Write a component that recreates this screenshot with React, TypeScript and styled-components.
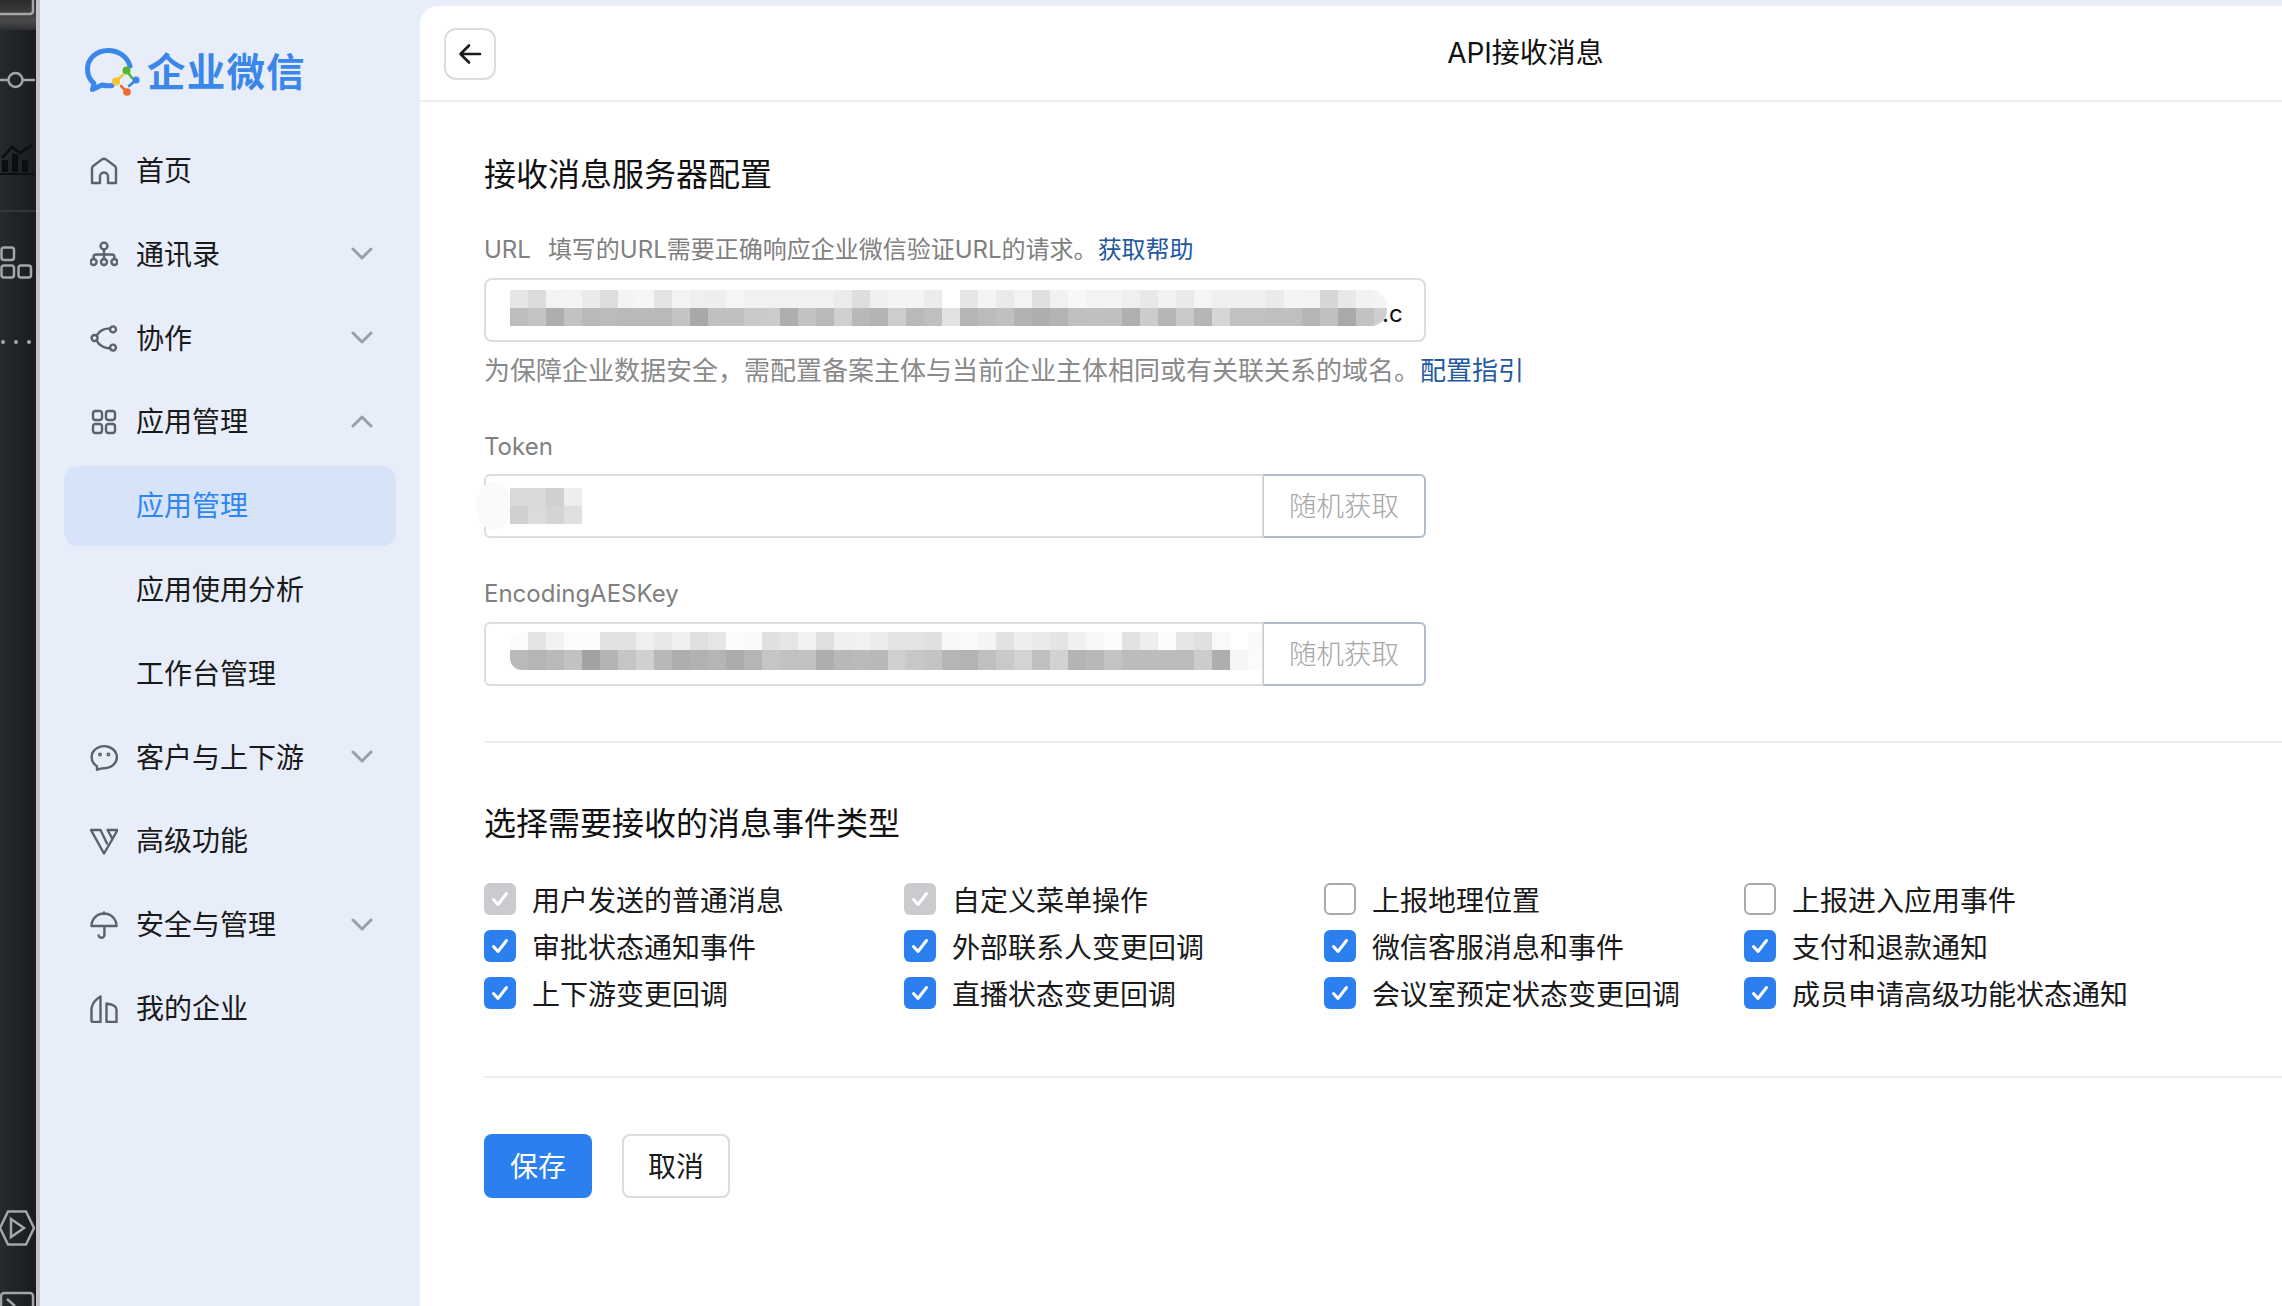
import React from 'react';
import styled, { createGlobalStyle } from 'styled-components';

const GlobalStyle = createGlobalStyle`
  html, body {
    margin: 0;
    padding: 0;
    height: 100%;
    overflow: hidden;
    background: #e7edf9;
    font-family: Inter, "Noto Sans CJK SC", sans-serif;
    color: #1a1a1a;
  }
  * { box-sizing: border-box; }
`;

const Page = styled.div`
  display: flex;
  width: 2282px;
  height: 1306px;
  overflow: hidden;
`;

const Rail = styled.div`
  position: relative;
  flex: none;
  width: 40px;
  display: flex;
  flex-direction: column;
  justify-content: space-between;
  background: linear-gradient(90deg, #262a2e 0, #1a1b1d 36px);
  border-right: 4px solid #c0c3c7;

  &::before {
    content: '';
    position: absolute;
    top: 0;
    left: 0;
    width: 36px;
    height: 30px;
    background: linear-gradient(180deg, #2a2a2c 0, #4a4a4c 70%, #2c2e31 100%);
  }
`;

const RailIcons = styled.svg`
  position: relative;
  display: block;
  width: 36px;
  fill: none;
  stroke: #a4a6a8;
  stroke-width: 2.5;
`;

const Sidebar = styled.nav`
  flex: none;
  width: 380px;
  padding: 0 24px;
  background: #e7edf9;
`;

const Logo = styled.div`
  display: flex;
  align-items: center;
  height: 131px;
  padding: 13px 0 0 21px;
  gap: 6px;
`;

const LogoText = styled.span`
  font-size: 38.5px;
  font-weight: 700;
  letter-spacing: 1.2px;
  color: #3a86ea;
  line-height: 1;
`;

const Menu = styled.ul`
  list-style: none;
  margin: 0;
  padding: 0;
  display: flex;
  flex-direction: column;
  gap: 3.8px;
`;

const MenuRow = styled.li<{ $sub?: boolean; $active?: boolean }>`
  display: flex;
  align-items: center;
  gap: 18px;
  height: 80px;
  padding: 0 23px 0 ${(p) => (p.$sub ? '72px' : '26px')};
  border-radius: 14px;
  font-size: 28px;
  color: ${(p) => (p.$active ? '#2f86f0' : '#1a1a1a')};
  background: ${(p) => (p.$active ? '#d6e3f9' : 'transparent')};
`;

const MenuLabel = styled.span`
  flex: 1;
  line-height: 40px;
`;

const MenuIcon = styled.svg`
  flex: none;
  width: 28px;
  height: 28px;
  fill: none;
  stroke: #5d6168;
  stroke-width: 2.4;
  stroke-linejoin: round;
  stroke-linecap: round;
`;

const Chevron = styled.svg<{ $up?: boolean }>`
  flex: none;
  width: 22px;
  height: 13px;
  fill: none;
  stroke: #9b9fa7;
  stroke-width: 3;
  stroke-linecap: round;
  stroke-linejoin: round;
  transform: translateY(-1px) ${(p) => (p.$up ? 'rotate(180deg)' : '')};
`;

const Main = styled.main`
  flex: 1;
  margin-top: 6px;
  min-width: 0;
  background: #fff;
  border-top-left-radius: 18px;
  overflow: hidden;
`;

const TopBar = styled.header`
  display: flex;
  align-items: flex-start;
  height: 96px;
  padding: 22px 0 0 24px;
  border-bottom: 2px solid #eeeeef;
`;

const BackButton = styled.button`
  flex: none;
  display: flex;
  align-items: center;
  justify-content: center;
  width: 52px;
  height: 52px;
  padding: 0;
  background: #fff;
  border: 2px solid #dcdcdc;
  border-radius: 12px;

  svg {
    width: 24px;
    height: 24px;
    fill: none;
    stroke: #1a1a1a;
    stroke-width: 2.6;
    stroke-linecap: round;
    stroke-linejoin: round;
  }
`;

const PageTitle = styled.h1`
  flex: 1;
  margin: 0;
  padding-left: 273px;
  text-align: center;
  font-size: 28px;
  font-weight: 400;
  line-height: 50px;
  color: #111;
`;

const Content = styled.section`
  padding: 51px 0 0 64px;
`;

const SectionTitle = styled.h2<{ $top?: number }>`
  margin: ${(p) => p.$top ?? 0}px 0 0;
  font-size: 32px;
  font-weight: 400;
  line-height: 44px;
  color: #111;
`;

const FieldLabel = styled.div<{ $top: number }>`
  margin-top: ${(p) => p.$top}px;
  font-size: 24px;
  line-height: 36px;
  color: #808080;
`;

const UrlTag = styled.span`
  margin-right: 17px;
`;

const HelpLink = styled.a`
  color: #24589f;
  text-decoration: none;
`;

const HelpText = styled.div`
  margin-top: 11px;
  font-size: 26px;
  line-height: 36px;
  color: #8a8a8a;
`;

const InputRow = styled.div<{ $top: number }>`
  position: relative;
  display: flex;
  width: 942px;
  height: 64px;
  margin-top: ${(p) => p.$top}px;
`;

const InputBox = styled.div<{ $alone?: boolean; $pad: number }>`
  flex: 1;
  min-width: 0;
  display: flex;
  align-items: flex-start;
  padding: ${(p) => p.$pad}px 0 0 24px;
  background: #fff;
  border: 2px solid #dddddf;
  border-right-width: ${(p) => (p.$alone ? '2px' : '1px')};
  border-radius: ${(p) => (p.$alone ? '8px' : '6px 0 0 6px')};
  overflow: hidden;
`;

const InputTail = styled.span`
  flex: none;
  margin: 6px 0 0 -5px;
  font-size: 24px;
  line-height: 36px;
  color: #111;
`;

const RandomButton = styled.button`
  flex: none;
  width: 163px;
  padding: 0 0 4px;
  background: #fff;
  border: 2px solid #aebccb;
  border-left: 1px solid #c9ced4;
  border-radius: 0 6px 6px 0;
  font-family: inherit;
  font-size: 27.5px;
  font-weight: 300;
  color: #a6a6a6;
`;

const MosaicSvg = styled.svg<{ $radius: string }>`
  position: relative;
  z-index: 1;
  flex: none;
  display: block;
  border-radius: ${(p) => p.$radius};
`;

const Smudge = styled.div`
  position: absolute;
  left: -8px;
  top: 8px;
  width: 36px;
  height: 48px;
  border-radius: 50%;
  background: #fafafa;
`;

const Rule = styled.hr<{ $top: number }>`
  margin: ${(p) => p.$top}px 0 0;
  height: 2px;
  border: 0;
  background: #eeeeef;
`;

const EventGrid = styled.div`
  display: grid;
  grid-template-columns: repeat(4, 420px);
  row-gap: 15px;
  margin-top: 37px;
`;

const EventItem = styled.label`
  display: flex;
  align-items: center;
  gap: 16px;
  height: 32px;
  font-size: 28px;
  white-space: nowrap;
  color: #1a1a1a;
`;

const CheckBox = styled.span<{ $state: 'on' | 'off' | 'locked' }>`
  flex: none;
  display: flex;
  width: 32px;
  height: 32px;
  border-radius: 6px;
  background: ${(p) => (p.$state === 'on' ? '#2b7fee' : p.$state === 'locked' ? '#c9cbcf' : '#fff')};
  border: ${(p) => (p.$state === 'off' ? '2px solid #a9a9ab' : '0')};

  svg {
    width: 32px;
    height: 32px;
    fill: none;
    stroke: #fff;
    stroke-width: 3;
    stroke-linecap: round;
    stroke-linejoin: round;
  }
`;

const Actions = styled.div`
  display: flex;
  gap: 30px;
  margin-top: 56px;
`;

const ActionButton = styled.button<{ $primary?: boolean }>`
  width: 108px;
  height: 64px;
  padding: 0 0 2px;
  border-radius: 8px;
  font-family: inherit;
  font-size: 28px;
  color: ${(p) => (p.$primary ? '#fff' : '#1a1a1a')};
  background: ${(p) => (p.$primary ? '#2b7fee' : '#fff')};
  border: ${(p) => (p.$primary ? '0' : '2px solid #dcdcdc')};
`;

const urlMosaic = [
  'e6 dc f3 f4 ea dd f4 f6 e4 f3 ef ee f5 f1 f1 f1 f1 f1 eb de f0 f4 f4 ec ff e6 f4 ea f3 e0 f1 f8 f3 f3 ef e8 f2 ea f5 ef ef f0 ea f4 f3 d6 e8 f2 f4',
  'bd c4 ae c2 b9 bb b9 b9 b9 c4 a8 c0 bf c9 cb ae c2 b9 cf b8 b3 cd b9 bf e2 b5 bb c0 b2 ae b3 bf c0 bf af cc b6 c9 b6 d6 c1 c1 bf bf b5 c0 a9 c2 ce',
];

const tokenMosaic = ['d9 d9 d0 ee', 'cf db d4 df'];

const aesMosaic = [
  'fb e4 f2 fb fb e2 e2 ef e7 f0 df e6 fc fa e0 e6 f1 df f0 f1 ec e3 e3 e0 f8 f9 f4 e2 ee ea e4 f0 f8 fc e2 ee fc e6 e0 f9 ff fa',
  'b9 b5 b9 c2 a2 b4 c5 d0 b8 ae b1 b5 ac b5 c5 c1 c1 ae b8 ba b8 cf c7 c3 b6 b3 bf c9 d3 bf d2 b4 b8 c4 bc bc bc bc cc ae f5 fb',
];

function Mosaic(props: { rows: string[]; heights: number[]; width?: number; radius?: string }) {
  const cells = props.rows.map((r) => r.split(' '));
  const fullWidth = cells[0].length * 18;
  const width = props.width ?? fullWidth;
  const height = props.heights.reduce((a, b) => a + b, 0);
  let y = 0;
  return (
    <MosaicSvg
      $radius={props.radius ?? '0'}
      width={width}
      height={height}
      viewBox={`0 0 ${width} ${height}`}
      shapeRendering="crispEdges"
    >
      {cells.map((row, r) => {
        const top = y;
        y += props.heights[r];
        return row.map((c, i) => (
          <rect key={`${r}-${i}`} x={i * 18} y={top} width={18} height={props.heights[r]} fill={`#${c}${c}${c}`} />
        ));
      })}
    </MosaicSvg>
  );
}

const icons: Record<string, React.ReactNode> = {
  home: <path d="M2 26V11.5Q2 10 3.2 9L12 2.4Q14 1 16 2.4L24.8 9Q26 10 26 11.5V26H18V19.5a4 4 0 0 0-8 0V26Z" />,
  contacts: (
    <>
      <circle cx="14" cy="5" r="3.4" />
      <circle cx="3.6" cy="21" r="3" />
      <circle cx="14" cy="21" r="3" />
      <circle cx="24.4" cy="21" r="3" />
      <path d="M3.6 18V16Q3.6 13.5 6 13.5H22Q24.4 13.5 24.4 16V18M14 8.5V18" />
    </>
  ),
  collab: (
    <>
      <circle cx="4.6" cy="13" r="3" />
      <circle cx="23" cy="4.4" r="3" />
      <circle cx="23" cy="22.6" r="3" />
      <path d="M20 3.8C14.500 2.800 9 6 6.600 10.400M6.600 15.600C9 20 14.500 24 20 23.200" />
    </>
  ),
  apps: (
    <>
      <rect x="3" y="3" width="9" height="9" rx="2.4" />
      <rect x="16" y="3" width="9" height="9" rx="2.4" />
      <rect x="3" y="16" width="9" height="9" rx="2.4" />
      <rect x="16" y="16" width="9" height="9" rx="2.4" />
    </>
  ),
  chat: (
    <>
      <path d="M7 25.8V22.2A12.6 11 0 1 1 14 24.2Q10.6 24.2 7 25.8Z" />
      <circle cx="10" cy="10.5" r="0.8" />
      <circle cx="18.4" cy="10.5" r="0.8" />
    </>
  ),
  advanced: <path d="M1 3H10.500L17 16.500M1 3L14 26.500L22.500 12M17.500 3H27.500L22.500 12Z" />,
  shield: <path d="M14 1.500V3M1.500 15A12.500 12.500 0 0 1 26.500 15M1.500 15H26.500M14.400 15V24.500A3 3 0 0 1 8.600 24.500" />,
  company: <path d="M1.500 13Q3 6 10.500 1.500V27H3Q1.500 27 1.500 25.500ZM16.500 8.500Q26.500 9.500 26.500 15V27H16.500Z" />,
};

function NavItem(props: { icon?: string; label: string; arrow?: 'up' | 'down'; sub?: boolean; active?: boolean }) {
  return (
    <MenuRow $sub={props.sub} $active={props.active}>
      {props.icon && <MenuIcon viewBox="0 0 28 28">{icons[props.icon]}</MenuIcon>}
      <MenuLabel>{props.label}</MenuLabel>
      {props.arrow && (
        <Chevron $up={props.arrow === 'up'} viewBox="0 0 22 13">
          <path d="M2 2L11 11L20 2" />
        </Chevron>
      )}
    </MenuRow>
  );
}

const events: [string, 'on' | 'off' | 'locked'][] = [
  ['用户发送的普通消息', 'locked'],
  ['自定义菜单操作', 'locked'],
  ['上报地理位置', 'off'],
  ['上报进入应用事件', 'off'],
  ['审批状态通知事件', 'on'],
  ['外部联系人变更回调', 'on'],
  ['微信客服消息和事件', 'on'],
  ['支付和退款通知', 'on'],
  ['上下游变更回调', 'on'],
  ['直播状态变更回调', 'on'],
  ['会议室预定状态变更回调', 'on'],
  ['成员申请高级功能状态通知', 'on'],
];

export default function App() {
  return (
    <Page>
      <GlobalStyle />
      <Rail>
        <RailIcons height="352" viewBox="0 0 36 352">
          <rect x="-4" y="-10" width="37" height="24" rx="3" />
          <path d="M0 80H8M23 80H35" />
          <circle cx="15.5" cy="80" r="7" />
          <path d="M0 174H34" stroke="#0c0d0e" strokeWidth="2" />
          <path d="M2 172V160H8V172ZM12 172V154H18V172ZM22 172V160H28V172Z" fill="#0c0d0e" stroke="none" />
          <path d="M2 158L12 147L20 153L32 145" stroke="#0c0d0e" strokeWidth="2.5" />
          <path d="M0 211H36" stroke="#3a3d40" strokeWidth="1.5" />
          <rect x="1.5" y="247.5" width="12.5" height="12.5" rx="2.5" />
          <rect x="1.5" y="265.5" width="12.5" height="12" rx="2.5" />
          <rect x="18.5" y="265.5" width="12.5" height="12" rx="2.5" />
          <circle cx="3" cy="342" r="2" fill="#a4a6a8" stroke="none" />
          <circle cx="16" cy="342" r="2" fill="#a4a6a8" stroke="none" />
          <circle cx="29" cy="342" r="2" fill="#a4a6a8" stroke="none" />
        </RailIcons>
        <RailIcons height="96" viewBox="0 0 36 96">
          <path d="M8 1.5H26L34 18L26 34.5H8L0 18Z" />
          <path d="M11 9L24 18L11 27Z" />
          <rect x="1" y="83" width="32" height="24" rx="3" />
          <path d="M7 89L15 96" />
        </RailIcons>
      </Rail>

      <Sidebar>
        <Logo>
          <svg width="56" height="48" viewBox="0 0 56 48">
            <path
              d="M45 18C42 8 33 2.5 23 2.5C11 2.5 2.5 11 2.5 21C2.5 28 6 33 9 35.5L7.5 41.5L17 37C21 38 24 38 27 37.5"
              fill="none"
              stroke="#3a86ea"
              strokeWidth="5"
              strokeLinecap="round"
              strokeLinejoin="round"
            />
            <path d="M42 23L47 30" stroke="#58b530" strokeWidth="2.5" strokeLinecap="round" />
            <circle cx="41.5" cy="22.5" r="4" fill="#58b530" />
            <path d="M30 34L38 27" stroke="#f4c233" strokeWidth="2.5" strokeLinecap="round" />
            <circle cx="31" cy="33.5" r="4" fill="#f4c233" />
            <path d="M44 38L50 33" stroke="#3a86ea" strokeWidth="2.5" strokeLinecap="round" />
            <circle cx="51" cy="32" r="3.6" fill="#3a86ea" />
            <path d="M36 38L42 44" stroke="#ee6a2d" strokeWidth="2.5" strokeLinecap="round" />
            <circle cx="42" cy="44" r="3.8" fill="#ee6a2d" />
          </svg>
          <LogoText>企业微信</LogoText>
        </Logo>
        <Menu>
          <NavItem icon="home" label="首页" />
          <NavItem icon="contacts" label="通讯录" arrow="down" />
          <NavItem icon="collab" label="协作" arrow="down" />
          <NavItem icon="apps" label="应用管理" arrow="up" />
          <NavItem sub active label="应用管理" />
          <NavItem sub label="应用使用分析" />
          <NavItem sub label="工作台管理" />
          <NavItem icon="chat" label="客户与上下游" arrow="down" />
          <NavItem icon="advanced" label="高级功能" />
          <NavItem icon="shield" label="安全与管理" arrow="down" />
          <NavItem icon="company" label="我的企业" />
        </Menu>
      </Sidebar>

      <Main>
        <TopBar>
          <BackButton aria-label="返回">
            <svg viewBox="0 0 24 24">
              <path d="M22 12H3M11 3.5L2.5 12L11 20.5" />
            </svg>
          </BackButton>
          <PageTitle>API接收消息</PageTitle>
        </TopBar>
        <Content>
          <SectionTitle>接收消息服务器配置</SectionTitle>
          <FieldLabel $top={35}>
            <UrlTag>URL</UrlTag>填写的URL需要正确响应企业微信验证URL的请求。<HelpLink>获取帮助</HelpLink>
          </FieldLabel>
          <InputRow $top={10}>
            <InputBox $alone $pad={10}>
              <Mosaic rows={urlMosaic} heights={[18, 18]} width={877} radius="0 16px 16px 0" />
              <InputTail>.c</InputTail>
            </InputBox>
          </InputRow>
          <HelpText>
            为保障企业数据安全，需配置备案主体与当前企业主体相同或有关联关系的域名。<HelpLink>配置指引</HelpLink>
          </HelpText>
          <FieldLabel $top={40}>Token</FieldLabel>
          <InputRow $top={9}>
            <InputBox $pad={12}>
              <Mosaic rows={tokenMosaic} heights={[18, 18]} />
            </InputBox>
            <RandomButton>随机获取</RandomButton>
            <Smudge />
          </InputRow>
          <FieldLabel $top={38}>EncodingAESKey</FieldLabel>
          <InputRow $top={10}>
            <InputBox $pad={8}>
              <Mosaic rows={aesMosaic} heights={[18, 20]} radius="10px 0 0 12px" />
            </InputBox>
            <RandomButton>随机获取</RandomButton>
          </InputRow>
          <Rule $top={55} />
          <SectionTitle $top={59}>选择需要接收的消息事件类型</SectionTitle>
          <EventGrid>
            {events.map(([label, state]) => (
              <EventItem key={label}>
                <CheckBox $state={state}>
                  {state !== 'off' && (
                    <svg viewBox="0 0 32 32">
                      <path d="M9.5 16.5L14 21.5L22.5 10.5" />
                    </svg>
                  )}
                </CheckBox>
                {label}
              </EventItem>
            ))}
          </EventGrid>
          <Rule $top={67} />
          <Actions>
            <ActionButton $primary>保存</ActionButton>
            <ActionButton>取消</ActionButton>
          </Actions>
        </Content>
      </Main>
    </Page>
  );
}
